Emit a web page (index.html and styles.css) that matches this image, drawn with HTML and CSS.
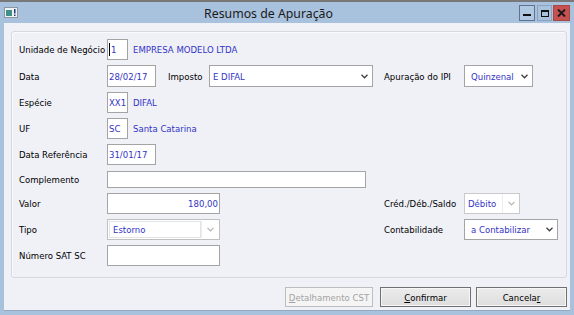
FILE: index.html
```html
<!DOCTYPE html>
<html>
<head>
    <title>Resumos de Apuração</title>
    <link rel="stylesheet" href="styles.css">
</head>
<body>
    <div class="window">
        <div class="titlebar">
            <svg class="app-icon" width="14" height="11" viewBox="0 0 14 11">
                <rect x="0.5" y="0.5" width="13" height="10" fill="#eef2f4" stroke="#8c96a0"/>
                <rect x="2" y="3" width="6" height="6" fill="#3e8f86"/>
                <rect x="10" y="2" width="1.5" height="4.5" fill="#1d3c78"/>
                <rect x="10" y="7.5" width="1.5" height="1.5" fill="#1d3c78"/>
            </svg>
            <div class="title">Resumos de Apuração</div>
            <div class="caption-buttons">
                <div class="cap-btn cap-min"><span class="glyph-min"></span></div>
                <div class="cap-btn cap-max"><span class="glyph-max"></span></div>
                <div class="cap-btn cap-close">
                    <svg width="9" height="8" viewBox="0 0 9 8">
                        <path d="M1 0.5 L8 7.5 M8 0.5 L1 7.5" stroke="#1a1a1a" stroke-width="2"/>
                    </svg>
                </div>
            </div>
        </div>

        <div class="client">
            <div class="groupbox">
                <div class="row">
                    <label>Unidade de Negócio</label>
                    <div class="cell">
                        <div class="field w-code"><span class="caret"></span>1</div>
                        <span class="desc">EMPRESA MODELO LTDA</span>
                    </div>
                </div>

                <div class="row row-data">
                    <label>Data</label>
                    <div class="cell">
                        <div class="field w-date">28/02/17</div>
                        <label class="inline-label">Imposto</label>
                        <div class="select w-imposto">
                            <span class="select-text">E DIFAL</span>
                            <svg class="chevron" width="7" height="5" viewBox="0 0 7 5"><path d="M0.5 0.8 L3.5 3.8 L6.5 0.8" fill="none" stroke="#404040" stroke-width="1.3"/></svg>
                        </div>
                    </div>
                    <label>Apuração do IPI</label>
                    <div class="select w-quinzenal">
                        <span class="select-text pad-wide">Quinzenal</span>
                        <svg class="chevron" width="7" height="5" viewBox="0 0 7 5"><path d="M0.5 0.8 L3.5 3.8 L6.5 0.8" fill="none" stroke="#404040" stroke-width="1.3"/></svg>
                    </div>
                </div>

                <div class="row">
                    <label>Espécie</label>
                    <div class="cell">
                        <div class="field w-code">XX1</div>
                        <span class="desc">DIFAL</span>
                    </div>
                </div>

                <div class="row">
                    <label>UF</label>
                    <div class="cell">
                        <div class="field w-code">SC</div>
                        <span class="desc">Santa Catarina</span>
                    </div>
                </div>

                <div class="row">
                    <label>Data Referência</label>
                    <div class="cell">
                        <div class="field w-date">31/01/17</div>
                    </div>
                </div>

                <div class="row row-short">
                    <label>Complemento</label>
                    <div class="cell">
                        <div class="field w-compl"></div>
                    </div>
                </div>

                <div class="row">
                    <label>Valor</label>
                    <div class="cell">
                        <div class="field w-valor align-right">180,00</div>
                    </div>
                    <label>Créd./Déb./Saldo</label>
                    <div class="select disabled w-debito">
                        <span class="select-text">Débito</span>
                        <span class="arrow-zone">
                            <svg width="7" height="5" viewBox="0 0 7 5"><path d="M0.5 0.8 L3.5 3.8 L6.5 0.8" fill="none" stroke="#b4b4b4" stroke-width="1.2"/></svg>
                        </span>
                    </div>
                </div>

                <div class="row">
                    <label>Tipo</label>
                    <div class="cell">
                        <div class="select disabled boxed w-valor">
                            <span class="select-text inner">Estorno</span>
                            <span class="arrow-zone">
                                <svg width="7" height="5" viewBox="0 0 7 5"><path d="M0.5 0.8 L3.5 3.8 L6.5 0.8" fill="none" stroke="#b4b4b4" stroke-width="1.2"/></svg>
                            </span>
                        </div>
                    </div>
                    <label>Contabilidade</label>
                    <div class="select w-contab">
                        <span class="select-text pad-wide">a Contabilizar</span>
                        <svg class="chevron" width="7" height="5" viewBox="0 0 7 5"><path d="M0.5 0.8 L3.5 3.8 L6.5 0.8" fill="none" stroke="#404040" stroke-width="1.3"/></svg>
                    </div>
                </div>

                <div class="row">
                    <label>Número SAT SC</label>
                    <div class="cell">
                        <div class="field w-valor"></div>
                    </div>
                </div>
            </div>

            <div class="button-bar">
                <button class="btn btn-cst" disabled><u>D</u>etalhamento CST</button>
                <button class="btn btn-wide"><u>C</u>onfirmar</button>
                <button class="btn btn-wide">Cancela<u>r</u></button>
            </div>
        </div>
    </div>
</body>
</html>
```

FILE: styles.css
```css
body {
    margin: 0;
    font-family: "DejaVu Sans Condensed", "DejaVu Sans", sans-serif;
    font-size: 9.5px;
    color: #000;
    background: #fff;
}
.window {
    width: 574px;
    height: 315px;
    box-sizing: border-box;
    border-top: 2px solid #787878;
    background: #a8c1dc;
    display: flex;
    flex-direction: column;
}

/* title bar */
.titlebar {
    height: 21px;
    display: flex;
    align-items: center;
    flex-shrink: 0;
}
.app-icon {
    margin-left: 4px;
}
.title {
    flex: 1;
    text-align: center;
    font-family: "Noto Sans", sans-serif;
    font-size: 12.3px;
    color: #1b1b1b;
    padding-top: 1px;
}
.caption-buttons {
    display: flex;
    align-self: flex-start;
    margin-top: 3px;
    margin-right: 4px;
}
.cap-btn {
    height: 16px;
    box-sizing: border-box;
    display: flex;
    align-items: center;
    justify-content: center;
}
.cap-min {
    width: 16px;
    border: 1px solid #61738c;
    background: #b0c8e2;
    margin-right: 2px;
}
.cap-max {
    width: 15px;
    border: 1px solid #8aa2bf;
    margin-right: 1px;
}
.cap-close {
    width: 17px;
    border: 1px solid #a9483e;
    background: #c75050;
}
.glyph-min {
    width: 8px;
    height: 2px;
    background: #111;
    margin-top: 3px;
}
.glyph-max {
    width: 8px;
    height: 7px;
    box-sizing: border-box;
    border: 1px solid #111;
    border-top-width: 2px;
}

/* client area */
.client {
    flex: 1;
    margin: 0 4px 4px 4px;
    background: #eff1f7;
    border-bottom: 1px solid #95a8bf;
    display: flex;
    flex-direction: column;
}
.groupbox {
    margin: 8px 3px 0 7px;
    height: 247px;
    box-sizing: border-box;
    border: 1px solid #d6d9e1;
    border-radius: 3px;
    box-shadow: inset 1px 1px 0 #fafbfd;
    padding: 7px 0 0 7px;
    display: flex;
    flex-direction: column;
    gap: 5px;
}
.row {
    display: grid;
    grid-template-columns: 88px 277px 80px auto;
    height: 21px;
    align-items: center;
}
.row-data {
    height: 22px;
}
.row-short {
    height: 18px;
}
.cell {
    display: flex;
    align-items: center;
    height: 100%;
}
label {
    white-space: nowrap;
}
.inline-label {
    width: 41px;
    margin-left: 12px;
}
.desc {
    color: #3333c6;
    margin-left: 5px;
}

/* text boxes */
.field {
    height: 100%;
    box-sizing: border-box;
    border: 1px solid #a4a4a4;
    background: #fff;
    color: #3333c6;
    padding: 0 2px 0 1px;
    display: flex;
    align-items: center;
    white-space: nowrap;
}
.align-right {
    justify-content: flex-end;
    padding-right: 1px;
}
.caret {
    width: 1px;
    height: 13px;
    background: #000;
    margin-right: 1px;
}
.w-code { width: 21px; }
.w-date { width: 49px; }
.w-compl { width: 259px; height: 17px; }
.w-valor { width: 113px; }

/* combo boxes */
.select {
    height: 100%;
    box-sizing: border-box;
    border: 1px solid #a4a4a4;
    background: #fff;
    color: #3333c6;
    display: flex;
    align-items: center;
}
.select-text {
    flex: 1;
    padding-left: 3px;
    white-space: nowrap;
}
.pad-wide {
    padding-left: 6px;
}
.chevron {
    margin-right: 4px;
}
.w-imposto { width: 164px; }
.w-quinzenal { width: 69px; }
.w-debito { width: 56px; }
.w-contab { width: 94px; height: 21px; }
.select.disabled {
    border-color: #cacaca;
}
.select.boxed {
    border-color: #c0c0c0;
    padding: 1px;
}
.select-text.inner {
    height: 100%;
    box-sizing: border-box;
    border: 1px solid #e4e4e4;
    display: flex;
    align-items: center;
}
.arrow-zone {
    width: 16px;
    height: 100%;
    display: flex;
    align-items: center;
    justify-content: center;
    border-left: 1px solid #ededed;
}

/* dialog buttons */
.button-bar {
    display: flex;
    justify-content: flex-end;
    gap: 5px;
    margin: 9px 3px 0 0;
}
.btn {
    height: 20px;
    box-sizing: border-box;
    border: 1px solid #707070;
    background: linear-gradient(#ececec, #dddddd);
    font-family: inherit;
    font-size: 9.5px;
    color: #000;
    padding: 0;
    border-radius: 0;
    box-shadow: inset 0 0 0 1px #f6f6f6;
}
.btn-wide {
    width: 91px;
}
.btn-cst {
    width: 88px;
    margin-right: 2px;
    border-color: #bdbdbd;
    background: #f4f4f4;
    color: #a3a3a3;
}
```
